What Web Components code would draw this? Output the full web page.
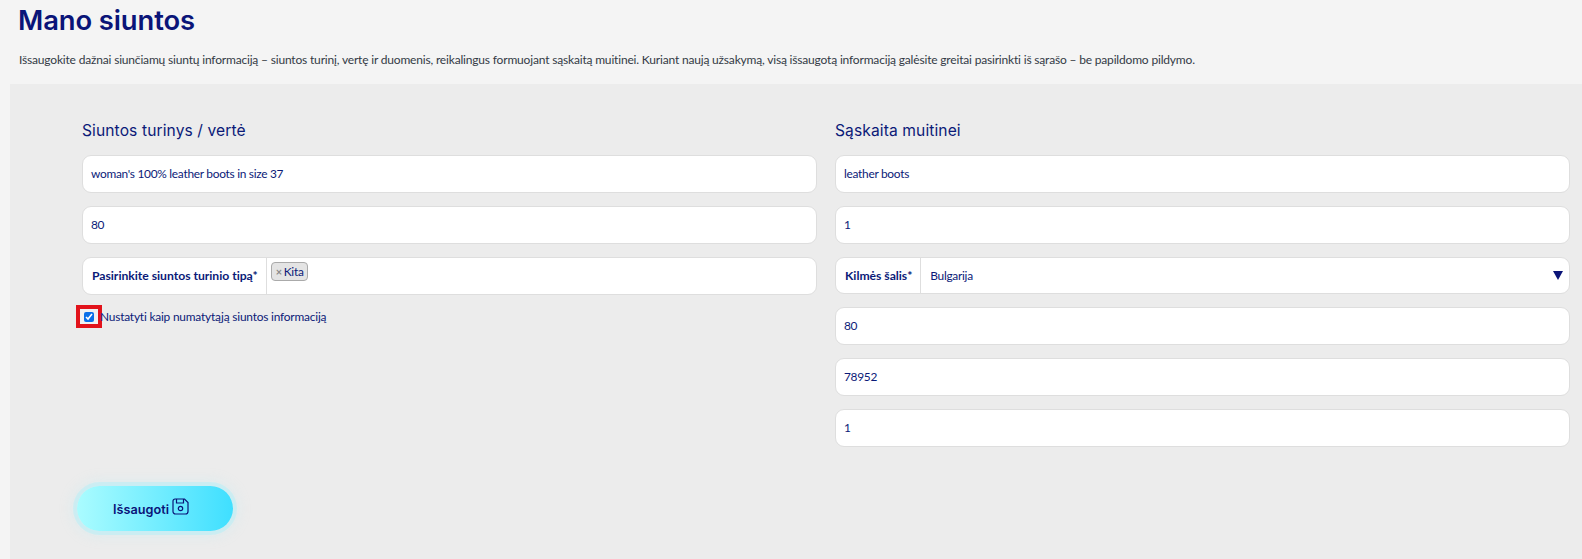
<!DOCTYPE html>
<html lang="lt"><head><meta charset="utf-8"><title>Mano siuntos</title>
<style>
html,body{margin:0;padding:0;background:#f4f4f4;height:559px;overflow:hidden}
body{font-family:"Lato","Noto Sans",sans-serif;color:#0b1a78}
</style></head><body>
<my-page>
  <page-head slot="head" title-text="Mano siuntos">Išsaugokite dažnai siunčiamų siuntų informaciją – siuntos turinį, vertę ir duomenis, reikalingus formuojant sąskaitą muitinei. Kuriant naują užsakymą, visą išsaugotą informaciją galėsite greitai pasirinkti iš sąrašo – be papildomo pildymo.</page-head>
  <form-col heading="Siuntos turinys / vertė" slot="left">
    <text-field>woman's 100% leather boots in size 37</text-field>
    <text-field>80</text-field>
    <label-field label="Pasirinkite siuntos turinio tipą*" type="tags"><tag-chip>Kita</tag-chip></label-field>
    <check-row>Nustatyti kaip numatytąją siuntos informaciją</check-row>
  </form-col>
  <form-col heading="Sąskaita muitinei" slot="right">
    <text-field>leather boots</text-field>
    <text-field>1</text-field>
    <label-field label="Kilmės šalis*" type="select">Bulgarija</label-field>
    <text-field>80</text-field>
    <text-field>78952</text-field>
    <text-field>1</text-field>
  </form-col>
  <save-button slot="action">Išsaugoti</save-button>
</my-page>
<script>
function def(name,html,init){
  customElements.define(name,class extends HTMLElement{
    connectedCallback(){
      if(this.shadowRoot)return;
      const r=this.attachShadow({mode:"open"});
      r.innerHTML=html;
      if(init)init(this,r);
    }
  });
}
const body='font:400 11.9px/16px "Lato","Noto Sans",sans-serif;letter-spacing:-.28px;color:#0b1a78';
def("my-page",`<style>
:host{display:block;width:1582px;height:559px}
.panel{margin-left:10px;height:475px;box-sizing:border-box;background:#ececec;padding:36px 12px 0 72px;display:flex;flex-direction:column}
.cols{display:grid;grid-template-columns:735px 735px;column-gap:18px;height:366px}
.act{margin-left:-5px}
</style><slot name="head"></slot><div class="panel"><div class="cols"><slot name="left"></slot><slot name="right"></slot></div><div class="act"><slot name="action"></slot></div></div>`);
def("page-head",`<style>
:host{display:block;height:84px;box-sizing:border-box;padding:5px 0 0 18px}
h1{margin:0;font:600 27.4px/30px "Inter","Noto Sans",sans-serif;color:#0a1478;letter-spacing:-.1px}
p{margin:17px 0 0 1px;font:400 12px/16px "Lato","Noto Sans",sans-serif;letter-spacing:-.18px;color:#333a45}
</style><h1></h1><p><slot></slot></p>`,(h,r)=>{r.querySelector("h1").textContent=h.getAttribute("title-text")});
def("form-col",`<style>
:host{display:block}
h2{margin:0 0 14px;font:400 15.6px/21px "Inter","Noto Sans",sans-serif;color:#0b1a78;letter-spacing:.1px}
.list{display:flex;flex-direction:column;gap:13px}
</style><h2></h2><div class="list"><slot></slot></div>`,(h,r)=>{r.querySelector("h2").textContent=h.getAttribute("heading")});
def("text-field",`<style>
:host{display:flex;align-items:center;box-sizing:border-box;height:38px;background:#fff;border:1px solid #dedede;border-radius:9px;padding:0 8px;${body}}
</style><slot></slot>`);
def("label-field",`<style>
:host{display:flex;box-sizing:border-box;height:38px;background:#fff;border:1px solid #dedede;border-radius:9px;${body}}
:host([type=select]){height:37px}
.l{display:flex;align-items:center;padding:0 8px 0 9px;font-size:12.2px;letter-spacing:-.03px;font-weight:700;border-right:1px solid #dedede;white-space:nowrap}
.v{flex:1;display:flex;align-items:center;padding:0 9px;position:relative}
:host([type=tags]) .v{align-items:flex-start;padding:4px 4px}
svg{position:absolute;right:6px;top:13px}
</style><div class="l"></div><div class="v"><slot></slot></div>`,(h,r)=>{
  r.querySelector(".l").textContent=h.getAttribute("label");
  if(h.getAttribute("type")==="select")r.querySelector(".v").insertAdjacentHTML("beforeend",'<svg width="10" height="9" viewBox="0 0 10 9"><path d="M0 0H10L5 9Z" fill="#0a1478"/></svg>');
});
def("tag-chip",`<style>
:host{display:inline-flex;align-items:center;gap:2px;box-sizing:border-box;height:19px;width:37px;padding:0 4px;background:#e4e4e4;border:1px solid #aaa;border-radius:4px;${body}}
i{font-style:normal;color:#888;font-size:11px;font-weight:700}
</style><i>×</i><slot></slot>`);
def("check-row",`<style>
:host{display:flex;align-items:center;height:23px;margin:-3px 0 0 -6px;${body};letter-spacing:-.2px}
.box{display:flex;align-items:center;justify-content:center;box-sizing:border-box;width:26px;height:23px;border:4px solid #e2131b;background:#f1f1f1;margin-right:-2px}
input{margin:0;width:10px;height:10px;accent-color:#0a6fe8}
span.t{padding-top:1px}
</style><span class="box"><input type="checkbox" checked></span><span class="t"><slot></slot></span>`);
def("save-button",`<style>
:host{display:inline-flex;align-items:center;justify-content:center;gap:3px;box-sizing:border-box;width:156px;height:45px;padding:2px 8px 0 0;border-radius:23px;background:linear-gradient(90deg,#aafcff,#3fdfff);box-shadow:0 0 0 4px rgba(170,240,250,.4),0 0 14px 4px rgba(170,240,250,.25);font:600 12.7px/16px "Inter","Noto Sans",sans-serif;color:#0a1478}
svg{margin-top:-6px}
</style><slot></slot><svg width="17" height="17" viewBox="0 0 17 17" fill="none" stroke="#0a1478" stroke-width="1.2"><path d="M3 1H12.5L16 4.5V13.5A2.5 2.5 0 0 1 13.5 16H3.5A2.5 2.5 0 0 1 1 13.5V3A2 2 0 0 1 3 1Z"/><path d="M4.5 1V5H11.5V1"/><circle cx="8.5" cy="10.5" r="2.2"/></svg>`);
</script>
</body></html>
